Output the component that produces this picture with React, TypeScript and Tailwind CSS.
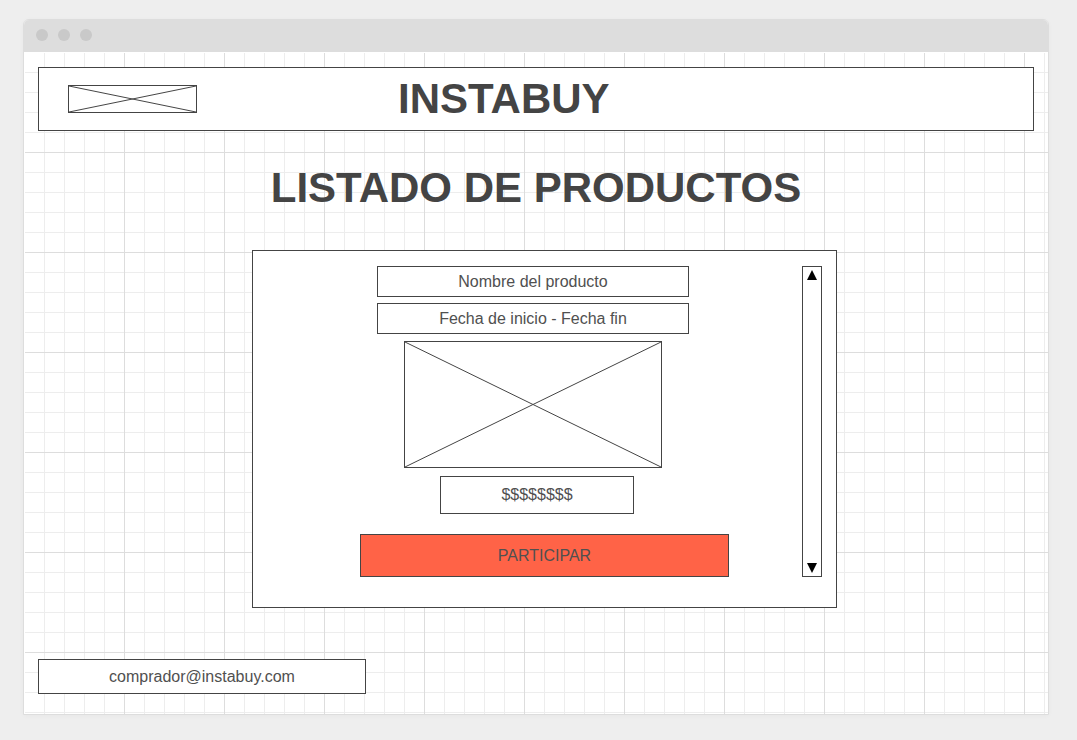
import type { ReactNode } from "react";

function Box({ className, children }: { className: string; children: ReactNode }) {
  return (
    <div
      className={`flex max-w-full items-center justify-center border border-[#444] bg-white ${className}`}
    >
      {children}
    </div>
  );
}

function ImagePlaceholder({ className, label }: { className: string; label: string }) {
  return (
    <div className={`border border-[#444] bg-white ${className}`}>
      <svg
        role="img"
        aria-label={label}
        className="block h-full w-full"
        viewBox="0 0 100 100"
        preserveAspectRatio="none"
      >
        <path
          d="M0 0 L100 100 M0 100 L100 0"
          stroke="#444"
          strokeWidth="1"
          fill="none"
          vectorEffect="non-scaling-stroke"
        />
      </svg>
    </div>
  );
}

function TitleBar() {
  return (
    <div className="flex h-8 items-center gap-2.5 bg-[#ddd] pb-0.5 pl-3">
      <span className="size-3 rounded-full bg-[#c9c9c9]" />
      <span className="size-3 rounded-full bg-[#c9c9c9]" />
      <span className="size-3 rounded-full bg-[#c9c9c9]" />
    </div>
  );
}

function ScrollTrack() {
  return (
    <div className="flex w-5 shrink-0 flex-col items-center justify-between border border-[#444] bg-white py-[3px]">
      <button type="button" aria-label="Subir">
        <svg className="block" width="10" height="10" viewBox="0 0 10 10">
          <path d="M5 0 L10 10 H0 Z" fill="#000" />
        </svg>
      </button>
      <button type="button" aria-label="Bajar">
        <svg className="block" width="10" height="10" viewBox="0 0 10 10">
          <path d="M0 0 H10 L5 10 Z" fill="#000" />
        </svg>
      </button>
    </div>
  );
}

function ProductPanel() {
  return (
    <section className="flex w-full max-w-[585px] border border-[#444] bg-white pt-[15px] pr-3.5 pb-[30px] pl-[34px]">
      <div className="flex min-w-0 flex-1 flex-col items-center">
        <div className="flex w-full flex-col items-center pr-[23px]">
          <Box className="h-[31px] w-[312px]">Nombre del producto</Box>
          <Box className="mt-1.5 h-[31px] w-[312px]">Fecha de inicio - Fecha fin</Box>
          <ImagePlaceholder
            className="mt-[7px] h-[127px] w-[258px] max-w-full"
            label="Imagen del producto"
          />
        </div>
        <div className="mt-2 flex w-full justify-center pr-[15px]">
          <Box className="h-[38px] w-[194px]">$$$$$$$$</Box>
        </div>
        <button
          type="button"
          className="mt-5 h-[43px] w-[369px] max-w-full border border-[#444] bg-[#ff6347]"
        >
          PARTICIPAR
        </button>
      </div>
      <ScrollTrack />
    </section>
  );
}

export default function App() {
  return (
    <div className="flex min-h-screen flex-col bg-[#eee] pt-[19px] pr-7 pb-[25px] pl-[23px] font-['Liberation_Sans',Arial,sans-serif] text-base leading-5 text-[#505050]">
      <div className="flex flex-1 flex-col overflow-hidden rounded-t-[6px] border border-[#ddd] bg-white shadow-[0_1px_5px_rgba(0,0,0,0.03)]">
        <TitleBar />
        <div className="mt-px -mr-px -mb-px ml-px flex flex-1 flex-col bg-[linear-gradient(to_right,transparent_99px,#ddd_99px),linear-gradient(to_bottom,transparent_99px,#ddd_99px),linear-gradient(to_right,transparent_19px,#ededed_19px),linear-gradient(to_bottom,transparent_19px,#ededed_19px)] bg-[size:100px_100px,100px_100px,20px_20px,20px_20px] pt-3.5 pr-[15px] pb-[21px] pl-[13px]">
          <header className="flex h-16 items-center border border-[#444] bg-white px-[29px]">
            <ImagePlaceholder className="h-7 w-[129px] shrink-0" label="Logotipo" />
            <h1 className="ml-[201px] text-[42px] leading-[48px] font-bold text-[#444]">
              INSTABUY
            </h1>
          </header>
          <main className="flex flex-col items-center">
            <h2 className="mt-[33px] text-center text-[42px] leading-[48px] font-bold text-[#444]">
              LISTADO DE PRODUCTOS
            </h2>
            <div className="mt-[38px] flex w-full justify-center pl-[17px]">
              <ProductPanel />
            </div>
          </main>
          <footer className="mt-auto pt-8">
            <Box className="h-[35px] w-[328px]">
              <a href="mailto:comprador@instabuy.com">comprador@instabuy.com</a>
            </Box>
          </footer>
        </div>
      </div>
    </div>
  );
}
